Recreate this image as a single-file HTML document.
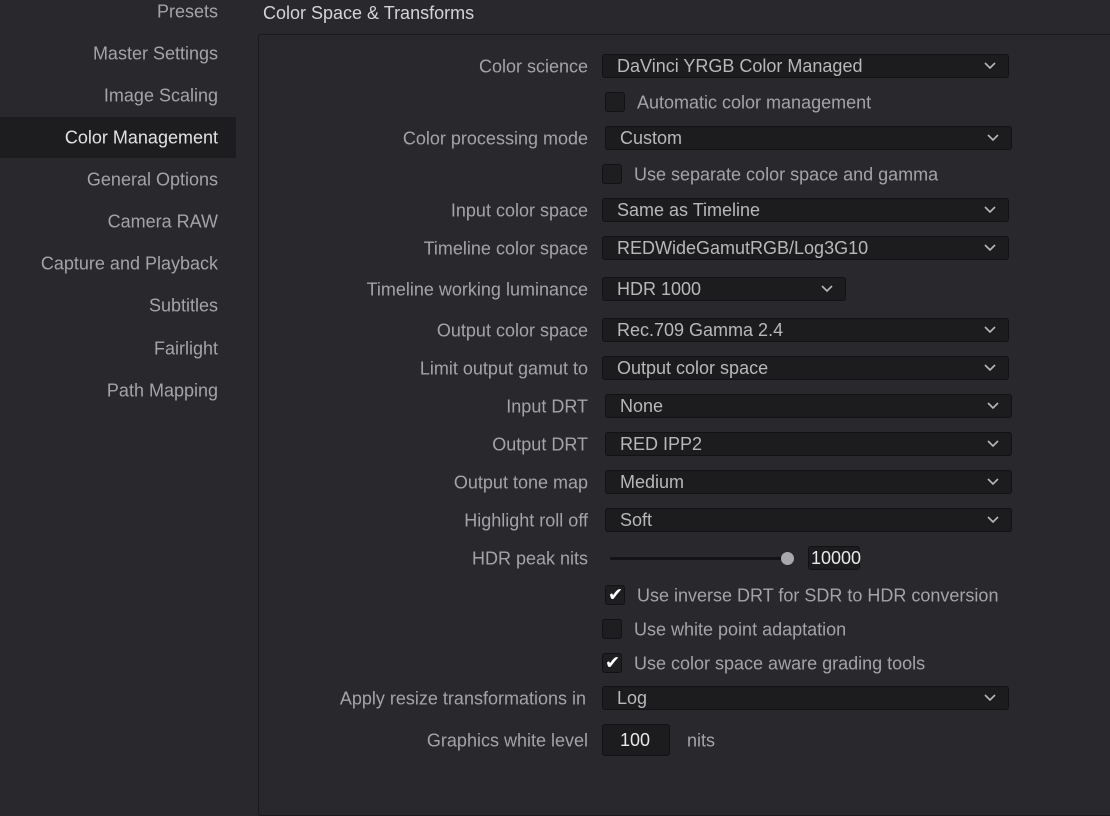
<!DOCTYPE html><html><head><style>
body{margin:0;width:1110px;height:800px;background:#28282d;font-family:"Liberation Sans",sans-serif;font-size:18px;color:#a4a4a8;position:relative;overflow:hidden}
div{position:absolute}
.s{right:892px;text-align:right;white-space:nowrap;transform:translateY(-45%)}
.sel{left:0;width:236px;top:117px;height:41px;background:#1d1d20}
.panel{left:258px;top:34px;width:870px;height:780px;border:1px solid #1a1a1d;border-radius:3px;background:#28282d}
.l{right:522px;text-align:right;white-space:nowrap;transform:translateY(-45%)}
.d{height:24px;background:#1c1c1f;border:1px solid #121214;border-radius:3px;transform:translateY(-50%);box-sizing:border-box;padding-left:14px;line-height:23px;color:#b8b8bb}
.d svg{position:absolute;right:12px;top:7px}
.c{width:20px;height:20px;background:#1e1e21;border:1px solid #121214;border-radius:3px;box-sizing:border-box;transform:translateY(-50%)}
.t{white-space:nowrap;transform:translateY(-45%)}
</style></head><body>
<div class="sel"></div>
<div class="s" style="top:11px">Presets</div>
<div class="s" style="top:53px">Master Settings</div>
<div class="s" style="top:95px">Image Scaling</div>
<div class="s" style="top:137px;color:#e2e2e4">Color Management</div>
<div class="s" style="top:179px">General Options</div>
<div class="s" style="top:221px">Camera RAW</div>
<div class="s" style="top:263px">Capture and Playback</div>
<div class="s" style="top:305px">Subtitles</div>
<div class="s" style="top:348px">Fairlight</div>
<div class="s" style="top:390px">Path Mapping</div>
<div style="left:263px;top:3px;color:#d4d4d6">Color Space &amp; Transforms</div>
<div class="panel"></div>

<div class="l" style="top:66px">Color science</div>
<div class="d" style="left:602px;width:407px;top:66px">DaVinci YRGB Color Managed<svg width="12" height="8"><path d="M1 1L6 6L11 1" stroke="#b8b8bb" stroke-width="1.6" fill="none"/></svg></div>
<div class="c" style="left:605px;top:102px"></div><div class="t" style="left:637px;top:102px">Automatic color management</div>
<div class="l" style="top:138px">Color processing mode</div>
<div class="d" style="left:605px;width:407px;top:138px">Custom<svg width="12" height="8"><path d="M1 1L6 6L11 1" stroke="#b8b8bb" stroke-width="1.6" fill="none"/></svg></div>
<div class="c" style="left:602px;top:174px"></div><div class="t" style="left:634px;top:174px">Use separate color space and gamma</div>
<div class="l" style="top:210px">Input color space</div>
<div class="d" style="left:602px;width:407px;top:210px">Same as Timeline<svg width="12" height="8"><path d="M1 1L6 6L11 1" stroke="#b8b8bb" stroke-width="1.6" fill="none"/></svg></div>
<div class="l" style="top:248px">Timeline color space</div>
<div class="d" style="left:602px;width:407px;top:248px">REDWideGamutRGB/Log3G10<svg width="12" height="8"><path d="M1 1L6 6L11 1" stroke="#b8b8bb" stroke-width="1.6" fill="none"/></svg></div>
<div class="l" style="top:289px">Timeline working luminance</div>
<div class="d" style="left:602px;width:244px;top:289px">HDR 1000<svg width="12" height="8"><path d="M1 1L6 6L11 1" stroke="#b8b8bb" stroke-width="1.6" fill="none"/></svg></div>
<div class="l" style="top:330px">Output color space</div>
<div class="d" style="left:602px;width:407px;top:330px">Rec.709 Gamma 2.4<svg width="12" height="8"><path d="M1 1L6 6L11 1" stroke="#b8b8bb" stroke-width="1.6" fill="none"/></svg></div>
<div class="l" style="top:368px">Limit output gamut to</div>
<div class="d" style="left:602px;width:407px;top:368px">Output color space<svg width="12" height="8"><path d="M1 1L6 6L11 1" stroke="#b8b8bb" stroke-width="1.6" fill="none"/></svg></div>
<div class="l" style="top:406px">Input DRT</div>
<div class="d" style="left:605px;width:407px;top:406px">None<svg width="12" height="8"><path d="M1 1L6 6L11 1" stroke="#b8b8bb" stroke-width="1.6" fill="none"/></svg></div>
<div class="l" style="top:444px">Output DRT</div>
<div class="d" style="left:605px;width:407px;top:444px">RED IPP2<svg width="12" height="8"><path d="M1 1L6 6L11 1" stroke="#b8b8bb" stroke-width="1.6" fill="none"/></svg></div>
<div class="l" style="top:482px">Output tone map</div>
<div class="d" style="left:605px;width:407px;top:482px">Medium<svg width="12" height="8"><path d="M1 1L6 6L11 1" stroke="#b8b8bb" stroke-width="1.6" fill="none"/></svg></div>
<div class="l" style="top:520px">Highlight roll off</div>
<div class="d" style="left:605px;width:407px;top:520px">Soft<svg width="12" height="8"><path d="M1 1L6 6L11 1" stroke="#b8b8bb" stroke-width="1.6" fill="none"/></svg></div>
<div class="l" style="top:558px">HDR peak nits</div>
<div style="left:610px;top:557px;width:178px;height:3px;background:#141416;border-radius:2px"></div>
<div style="left:781px;top:552px;width:13px;height:13px;border-radius:50%;background:#a9a9ab"></div>
<div class="d" style="left:808px;width:52px;top:558px;padding-left:2px;color:#e8e8e8">10000</div>
<div class="c" style="left:605px;top:595px"></div><div class="t" style="left:608px;top:594px;color:#fff;font-size:18px">✔</div><div class="t" style="left:637px;top:595px">Use inverse DRT for SDR to HDR conversion</div>
<div class="c" style="left:602px;top:629px"></div><div class="t" style="left:634px;top:629px">Use white point adaptation</div>
<div class="c" style="left:602px;top:663px"></div><div class="t" style="left:605px;top:662px;color:#fff;font-size:18px">✔</div><div class="t" style="left:634px;top:663px">Use color space aware grading tools</div>
<div class="l" style="top:698px;right:524px">Apply resize transformations in</div>
<div class="d" style="left:602px;width:407px;top:698px">Log<svg width="12" height="8"><path d="M1 1L6 6L11 1" stroke="#b8b8bb" stroke-width="1.6" fill="none"/></svg></div>
<div class="l" style="top:740px">Graphics white level</div>
<div class="d" style="left:602px;width:68px;top:740px;height:32px;line-height:31px;padding-left:17px;color:#e8e8e8">100</div>
<div class="t" style="left:687px;top:740px">nits</div>
</body></html>
